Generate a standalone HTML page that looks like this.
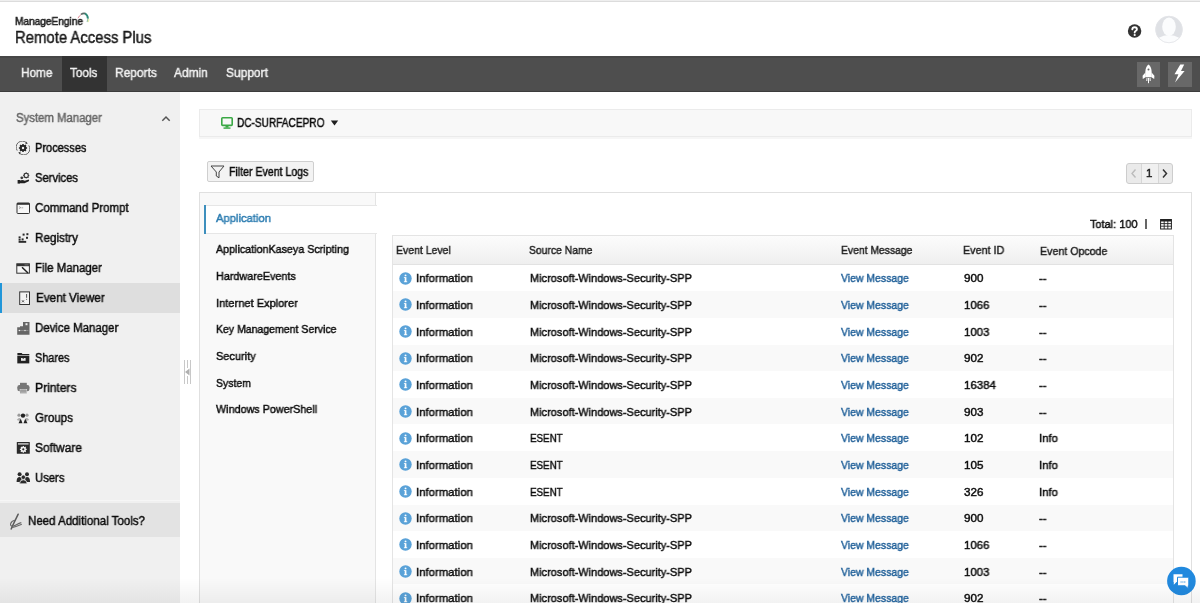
<!DOCTYPE html>
<html><head><meta charset="utf-8"><style>
html,body{margin:0;padding:0;width:1200px;height:603px;overflow:hidden;background:#fff;font-family:"Liberation Sans", sans-serif;}
.b{position:absolute;}
.t{position:absolute;white-space:nowrap;font-family:"Liberation Sans", sans-serif;transform-origin:0 0;will-change:transform;-webkit-text-stroke:0.45px currentColor;}
</style></head><body>
<div class="b" style="left:0px;top:0px;width:1200px;height:1px;background:#eeeeee"></div>
<div class="b" style="left:0px;top:1px;width:1200px;height:1px;background:#dcdcdc"></div>
<svg class="b" style="left:74px;top:10px" width="16" height="14" viewBox="0 0 16 14"><path d="M4 8.2 Q5.2 5.6 7.4 4.3" stroke="#d9707f" stroke-width="0.8" fill="none"/><path d="M7 4.4 Q9.3 2.9 11.4 3.6" stroke="#5b6b66" stroke-width="1.7" fill="none"/><path d="M11 3.5 Q13.9 5 13.9 8.8" stroke="#2f8a78" stroke-width="1.9" fill="none"/><path d="M13.9 8.5 Q13.8 10.6 13 11.8" stroke="#9cc3b0" stroke-width="1.3" fill="none"/><path d="M14.8 9 Q14.9 10.6 14.2 12" stroke="#e6ee9a" stroke-width="1.2" fill="none" opacity=".8"/></svg>
<svg class="b" style="left:1127px;top:24px" width="15" height="15" viewBox="0 0 15 15"><circle cx="7.6" cy="7" r="6.7" fill="#333"/><path d="M5.3 5.4 Q5.4 3.2 7.6 3.2 Q9.9 3.2 9.9 5.2 Q9.9 6.4 8.6 7 Q7.7 7.5 7.7 8.6" stroke="#fff" stroke-width="1.9" fill="none" stroke-linecap="round"/><circle cx="7.7" cy="11" r="1.1" fill="#fff"/></svg>
<svg class="b" style="left:1154px;top:15px" width="30" height="30" viewBox="0 0 30 30"><circle cx="15" cy="14.5" r="13.6" fill="#dfe1e5"/><ellipse cx="15" cy="11.8" rx="6.8" ry="9.2" fill="#fbfcfd"/><path d="M4.4 23 Q15 17 25.6 23 A13.6 13.6 0 0 1 4.4 23Z" fill="#fbfcfd"/><circle cx="15" cy="14.5" r="13.3" fill="none" stroke="#e3e5e8" stroke-width="0.8"/></svg>
<div class="b" style="left:0px;top:56px;width:1200px;height:36px;background:#4e4e4e"></div>
<div class="b" style="left:0px;top:56px;width:1200px;height:2px;background:#474747"></div>
<div class="b" style="left:0px;top:91px;width:1200px;height:1px;background:#3c3c3c"></div>
<div class="b" style="left:62px;top:56px;width:45px;height:36px;background:#333333"></div>
<div class="b" style="left:1137px;top:62px;width:23px;height:25px;background:#686868"></div>
<div class="b" style="left:1168px;top:62px;width:24px;height:25px;background:#686868"></div>
<svg class="b" style="left:1142px;top:64px" width="13" height="20" viewBox="0 0 13 20"><path d="M6.5 0.6 C9.8 3 10.2 8.5 9.2 13.2 L3.8 13.2 C2.8 8.5 3.2 3 6.5 0.6Z" fill="#fff"/><circle cx="6.5" cy="5.4" r="1" fill="#686868"/><path d="M3.4 8.5 L0.6 11.8 L0.8 15 L3.9 13Z M9.6 8.5 L12.4 11.8 L12.2 15 L9.1 13Z" fill="#fff"/><path d="M5 14 L4.8 17 M6.5 14 L6.5 19.2 M8 14 L8.2 17" stroke="#fff" stroke-width="1"/></svg>
<svg class="b" style="left:1174px;top:64px" width="11" height="19" viewBox="0 0 11 19"><path d="M6.3 0.5 L10.2 0.5 L7 6.9 L10.6 6.9 L1 18.6 L4.4 10.2 L0.5 10.2Z" fill="#fff"/></svg>
<div class="b" style="left:0px;top:92px;width:180px;height:511px;background:#f0f0f0"></div>
<svg class="b" style="left:161px;top:115px" width="10" height="7" viewBox="0 0 10 7"><path d="M1.3 5.8 L5 2 L8.7 5.8" stroke="#555" stroke-width="1.5" fill="none"/></svg>
<div class="b" style="left:0px;top:283px;width:180px;height:30px;background:#dedede"></div>
<div class="b" style="left:0px;top:283px;width:2px;height:30px;background:#2196d9"></div>
<div class="b" style="left:0px;top:500px;width:180px;height:1px;background:#f6f6f6"></div>
<div class="b" style="left:0px;top:503px;width:180px;height:34px;background:#e3e3e3"></div>
<svg class="b" style="left:183px;top:359px" width="9" height="26" viewBox="0 0 9 26"><path d="M1.5 1 V25 M4.5 1 V9 M4.5 17 V25 M7.5 1 V25" stroke="#c8c8c8" stroke-width="1"/><path d="M2 13 L6.5 9.5 L6.5 16.5Z" fill="#b0b0b0"/></svg>
<svg class="b" style="left:16px;top:141px" width="14" height="14" viewBox="0 0 14 14"><path d="M10.6 1.9 A6.1 6.1 0 0 0 1.2 9.6" stroke="#555" stroke-width="0.9" fill="none"/><path d="M3.4 12.1 A6.1 6.1 0 0 0 12.8 4.4" stroke="#555" stroke-width="0.9" fill="none"/><path d="M10 0.6 L11.8 2.4 L9.4 3.2Z M4 13.4 L2.2 11.6 L4.6 10.8Z" fill="#444"/><g transform="translate(7,7)"><circle r="3.3" fill="#262626"/><g stroke="#262626" stroke-width="1.5" stroke-linecap="butt"><path d="M0 -4.1 V4.1 M-4.1 0 H4.1 M-2.9 -2.9 L2.9 2.9 M-2.9 2.9 L2.9 -2.9"/></g><circle r="1.2" fill="#f0f0f0"/></g></svg>
<svg class="b" style="left:17px;top:172px" width="13" height="12" viewBox="0 0 13 12"><g transform="translate(9.2,3.4)"><circle r="2.1" fill="none" stroke="#333" stroke-width="1.1"/><path d="M0 -3.1 V-2 M0 2 V3.1 M-3.1 0 H-2 M2 0 H3.1 M-2.2 -2.2 L-1.5 -1.5 M1.5 1.5 L2.2 2.2 M-2.2 2.2 L-1.5 1.5 M1.5 -1.5 L2.2 -2.2" stroke="#333" stroke-width="1"/></g><circle cx="4.8" cy="5.8" r="1.4" fill="#3a3a3a"/><path d="M0.6 8 H3 V11.6 H0.6Z" fill="#222"/><path d="M3 8.4 Q5.8 7.5 7.8 8.8 L11.6 7.6 Q12.6 8.2 11.8 9.2 L7.5 11.2 L3 11.2Z" fill="#222"/></svg>
<svg class="b" style="left:16px;top:202px" width="14" height="12" viewBox="0 0 14 12"><rect x="1" y="1" width="12.5" height="10.5" rx="0.8" fill="#f7f7f7" stroke="#333" stroke-width="1"/><rect x="1" y="1" width="12.5" height="1.8" fill="#333"/><path d="M3 4.6 L4.8 5.6 L3 6.6" stroke="#777" stroke-width="0.6" fill="none"/><path d="M5.5 5.8 H7.2" stroke="#777" stroke-width="0.6"/></svg>
<svg class="b" style="left:18px;top:233px" width="11" height="10" viewBox="0 0 11 10"><g fill="#2a2a2a"><rect x="4.6" y="0.6" width="2" height="2"/><rect x="8.4" y="0.2" width="2" height="2"/><rect x="0.6" y="3.4" width="2" height="2"/><rect x="8" y="3.8" width="2" height="2"/><rect x="0.6" y="5.8" width="2" height="1.8"/><rect x="3.6" y="5.4" width="2" height="2"/><rect x="0.6" y="7.9" width="7.6" height="1.9"/></g></svg>
<svg class="b" style="left:16px;top:263px" width="14" height="11" viewBox="0 0 14 11"><rect x="0.8" y="0.8" width="12.6" height="9.4" fill="#f7f7f7" stroke="#333" stroke-width="1"/><rect x="0.8" y="0.8" width="12.6" height="2.4" fill="#333"/><rect x="8.5" y="1.5" width="4" height="0.8" fill="#888"/><path d="M6 4.2 L12 10" stroke="#222" stroke-width="1.5"/></svg>
<svg class="b" style="left:19px;top:291px" width="11" height="14" viewBox="0 0 11 14"><rect x="0.7" y="0.9" width="9.8" height="12.6" fill="#f3f3f3" stroke="#333" stroke-width="1"/><path d="M3 9.3 L5 11.3 M5 9.3 L3 11.3" stroke="#333" stroke-width="0.8"/><path d="M7.6 3 V6.8" stroke="#444" stroke-width="0.9"/><circle cx="7.6" cy="8.3" r="0.5" fill="#444"/></svg>
<svg class="b" style="left:17px;top:321px" width="13" height="14" viewBox="0 0 13 14"><path d="M6 1 H12.5 V13.8 H0.2 V6.3 H3 V5.2 H6Z" fill="#666"/><rect x="8.5" y="2.2" width="2" height="2" fill="#eee"/><path d="M1 9.5 H11.5" stroke="#aaa" stroke-width="0.5"/><circle cx="2.5" cy="9.5" r="0.7" fill="#eee"/><circle cx="8" cy="9.5" r="0.7" fill="#eee"/></svg>
<svg class="b" style="left:17px;top:352px" width="13" height="12" viewBox="0 0 13 12"><path d="M0.4 1 H4.6 L5.5 2 H12.3 V3 H0.4Z" fill="#222"/><rect x="0.3" y="3.6" width="12" height="7.8" fill="#222"/><rect x="4" y="6" width="4.6" height="2.8" fill="#e6e6e6"/><rect x="5.6" y="6.4" width="1.4" height="0.6" fill="#222"/></svg>
<svg class="b" style="left:17px;top:382px" width="13" height="12" viewBox="0 0 13 12"><rect x="3" y="0.8" width="6.8" height="2.5" fill="#777"/><rect x="0.3" y="3" width="12.2" height="6.2" rx="2.2" fill="#777"/><rect x="3" y="7.4" width="6.8" height="4.2" fill="#888" stroke="#f0f0f0" stroke-width="0.5"/><path d="M3.8 9 H9 M3.8 10.4 H9" stroke="#ddd" stroke-width="0.5"/></svg>
<svg class="b" style="left:16px;top:412px" width="14" height="12" viewBox="0 0 14 12"><circle cx="3" cy="3.2" r="1.6" fill="#999"/><circle cx="11" cy="3.2" r="1.6" fill="#999"/><path d="M0.8 8 Q3 4.8 5 7 L4 9Z M13.2 8 Q11 4.8 9 7 L10 9Z" fill="#aaa"/><circle cx="7" cy="3.6" r="2.2" fill="#222"/><path d="M2.5 11.2 L4.8 6.8 L6.5 11.2Z M7.5 11.2 L9.2 6.8 L11.5 11.2Z" fill="#222"/></svg>
<svg class="b" style="left:16px;top:441px" width="14" height="13" viewBox="0 0 14 13"><rect x="0.8" y="1" width="13" height="11.8" rx="0.5" fill="#2a2a2a"/><rect x="2" y="2.2" width="10.6" height="1.4" fill="#cfcfcf"/><g transform="translate(7.3,8.3)"><circle r="2.6" fill="#f0f0f0"/><path d="M0 -3.4 V3.4 M-3.4 0 H3.4 M-2.4 -2.4 L2.4 2.4 M-2.4 2.4 L2.4 -2.4" stroke="#f0f0f0" stroke-width="1.3"/><circle r="1.1" fill="#2a2a2a"/></g></svg>
<svg class="b" style="left:16px;top:471px" width="15" height="13" viewBox="0 0 15 13"><g fill="#2a2a2a"><circle cx="3.6" cy="3.3" r="2"/><circle cx="11" cy="3.3" r="2"/><path d="M0.6 10 Q0.8 6 3.6 6 Q5.5 6 6 7.5 L4 11 L0.6 11Z"/><path d="M14 10 Q13.8 6 11 6 Q9.2 6 8.7 7.5 L10.6 11 L14 11Z"/><circle cx="7.3" cy="6.2" r="2.2" fill="#2a2a2a" stroke="#f0f0f0" stroke-width="0.7"/><path d="M3.5 12.8 Q3.6 8.8 7.3 8.8 Q11 8.8 11.1 12.8Z" stroke="#f0f0f0" stroke-width="0.7"/></g></svg>
<svg class="b" style="left:8px;top:512px" width="15" height="18" viewBox="0 0 15 18"><path d="M10.2 2.2 L4.2 14.5 L3.2 17" stroke="#5a5a5a" stroke-width="1.5" fill="none" stroke-linecap="round"/><path d="M7 8.2 C2.2 9 1.2 14.2 4.4 14.2 C7 14.2 9.5 11.2 13.3 10.6" stroke="#666" stroke-width="1.1" fill="none"/><path d="M3.8 15.6 C7.5 14.8 10.5 13.6 13.8 12.2" stroke="#6a6a6a" stroke-width="1.1" fill="none"/></svg>
<div class="b" style="left:199px;top:109px;width:993px;height:28px;background:#f8f8f8;border:1px solid #ebebeb;box-sizing:border-box;box-shadow:0 2px 0 #f6f6f6"></div>
<svg class="b" style="left:221px;top:117px" width="12" height="12" viewBox="0 0 12 12"><rect x="0.8" y="0.8" width="10.4" height="7.6" rx="0.8" stroke="#3aa845" stroke-width="1.6" fill="none"/><rect x="4.5" y="8.8" width="3" height="1.8" fill="#3aa845"/><rect x="2.5" y="10.4" width="7" height="1.4" fill="#3aa845"/></svg>
<svg class="b" style="left:330px;top:120px" width="9" height="6" viewBox="0 0 9 6"><path d="M0.8 0.5 L8.2 0.5 L4.5 5.5Z" fill="#1f1f1f"/></svg>
<div class="b" style="left:207px;top:161px;width:107px;height:21px;background:#f3f3f3;border:1px solid #cfcfcf;border-radius:2px;box-sizing:border-box"></div>
<svg class="b" style="left:210px;top:165px" width="15" height="14" viewBox="0 0 15 14"><path d="M1 1 L14 1 L9 7 L9 12.8 L6.3 11 L6.3 7Z" stroke="#444" stroke-width="1" fill="none" stroke-linejoin="round"/></svg>
<div class="b" style="left:1126px;top:163px;width:47px;height:21px;border:1px solid #cdcdcd;border-radius:3px;box-sizing:border-box;background:#eaeaea;overflow:hidden"><div style="position:absolute;left:14px;top:0;width:16px;height:19px;background:#f0f0f0;border-left:1px solid #d6d6d6;border-right:1px solid #d6d6d6"></div></div>
<svg class="b" style="left:1130px;top:168px" width="8" height="11" viewBox="0 0 8 11"><path d="M5.5 1.5 L2 5.5 L5.5 9.5" stroke="#bbb" stroke-width="1.4" fill="none"/></svg>
<svg class="b" style="left:1161px;top:168px" width="8" height="11" viewBox="0 0 8 11"><path d="M2 1.5 L5.5 5.5 L2 9.5" stroke="#333" stroke-width="1.5" fill="none"/></svg>
<div class="b" style="left:199px;top:192px;width:993px;height:420px;border:1px solid #e0e0e0;box-sizing:border-box;background:#fff"></div>
<div class="b" style="left:200px;top:193px;width:175px;height:420px;background:#f9f9f9;border-right:1px solid #e4e4e4"></div>
<div class="b" style="left:204px;top:205px;width:173px;height:29px;background:#fff;border-top:1px solid #e6e6e6;border-bottom:1px solid #e6e6e6;box-sizing:border-box"></div>
<div class="b" style="left:204px;top:205px;width:2px;height:29px;background:#3d8fbd"></div>
<div class="b" style="left:1145.4px;top:219px;width:1.5px;height:10px;background:#666"></div>
<svg class="b" style="left:1160px;top:219px" width="12" height="11" viewBox="0 0 12 11"><rect x="0.6" y="0.5" width="10.8" height="9.5" fill="none" stroke="#222" stroke-width="1"/><rect x="0.6" y="0.5" width="10.8" height="2" fill="#222"/><path d="M0.6 4.6 H11.4 M0.6 7.2 H11.4 M4.2 0.5 V10 M7.8 0.5 V10" stroke="#222" stroke-width="0.9"/></svg>
<div class="b" style="left:392px;top:235px;width:782px;height:400px;border:1px solid #e4e4e4;border-bottom:none;box-sizing:border-box;background:#fff"></div>
<div class="b" style="left:393px;top:236px;width:780px;height:29px;background:linear-gradient(#fcfcfc,#efefef);border-bottom:1px solid #e2e2e2;box-sizing:border-box"></div>
<svg class="b" style="left:399px;top:271.50px" width="13" height="13" viewBox="0 0 13 13"><circle cx="6.5" cy="6.5" r="6.2" fill="#5aa2d8"/><rect x="5.7" y="5.2" width="1.7" height="4.8" fill="#fff"/><circle cx="6.55" cy="3.4" r="0.95" fill="#fff"/><rect x="4.9" y="9.3" width="3.3" height="0.9" fill="#fff"/><rect x="4.9" y="5.2" width="1.6" height="0.8" fill="#fff"/></svg>
<div class="b" style="left:393px;top:291.17px;width:780px;height:26.667px;background:#f9f9f9"></div>
<svg class="b" style="left:399px;top:298.17px" width="13" height="13" viewBox="0 0 13 13"><circle cx="6.5" cy="6.5" r="6.2" fill="#5aa2d8"/><rect x="5.7" y="5.2" width="1.7" height="4.8" fill="#fff"/><circle cx="6.55" cy="3.4" r="0.95" fill="#fff"/><rect x="4.9" y="9.3" width="3.3" height="0.9" fill="#fff"/><rect x="4.9" y="5.2" width="1.6" height="0.8" fill="#fff"/></svg>
<svg class="b" style="left:399px;top:324.83px" width="13" height="13" viewBox="0 0 13 13"><circle cx="6.5" cy="6.5" r="6.2" fill="#5aa2d8"/><rect x="5.7" y="5.2" width="1.7" height="4.8" fill="#fff"/><circle cx="6.55" cy="3.4" r="0.95" fill="#fff"/><rect x="4.9" y="9.3" width="3.3" height="0.9" fill="#fff"/><rect x="4.9" y="5.2" width="1.6" height="0.8" fill="#fff"/></svg>
<div class="b" style="left:393px;top:344.5px;width:780px;height:26.667px;background:#f9f9f9"></div>
<svg class="b" style="left:399px;top:351.50px" width="13" height="13" viewBox="0 0 13 13"><circle cx="6.5" cy="6.5" r="6.2" fill="#5aa2d8"/><rect x="5.7" y="5.2" width="1.7" height="4.8" fill="#fff"/><circle cx="6.55" cy="3.4" r="0.95" fill="#fff"/><rect x="4.9" y="9.3" width="3.3" height="0.9" fill="#fff"/><rect x="4.9" y="5.2" width="1.6" height="0.8" fill="#fff"/></svg>
<svg class="b" style="left:399px;top:378.17px" width="13" height="13" viewBox="0 0 13 13"><circle cx="6.5" cy="6.5" r="6.2" fill="#5aa2d8"/><rect x="5.7" y="5.2" width="1.7" height="4.8" fill="#fff"/><circle cx="6.55" cy="3.4" r="0.95" fill="#fff"/><rect x="4.9" y="9.3" width="3.3" height="0.9" fill="#fff"/><rect x="4.9" y="5.2" width="1.6" height="0.8" fill="#fff"/></svg>
<div class="b" style="left:393px;top:397.84px;width:780px;height:26.667px;background:#f9f9f9"></div>
<svg class="b" style="left:399px;top:404.84px" width="13" height="13" viewBox="0 0 13 13"><circle cx="6.5" cy="6.5" r="6.2" fill="#5aa2d8"/><rect x="5.7" y="5.2" width="1.7" height="4.8" fill="#fff"/><circle cx="6.55" cy="3.4" r="0.95" fill="#fff"/><rect x="4.9" y="9.3" width="3.3" height="0.9" fill="#fff"/><rect x="4.9" y="5.2" width="1.6" height="0.8" fill="#fff"/></svg>
<svg class="b" style="left:399px;top:431.50px" width="13" height="13" viewBox="0 0 13 13"><circle cx="6.5" cy="6.5" r="6.2" fill="#5aa2d8"/><rect x="5.7" y="5.2" width="1.7" height="4.8" fill="#fff"/><circle cx="6.55" cy="3.4" r="0.95" fill="#fff"/><rect x="4.9" y="9.3" width="3.3" height="0.9" fill="#fff"/><rect x="4.9" y="5.2" width="1.6" height="0.8" fill="#fff"/></svg>
<div class="b" style="left:393px;top:451.17px;width:780px;height:26.667px;background:#f9f9f9"></div>
<svg class="b" style="left:399px;top:458.17px" width="13" height="13" viewBox="0 0 13 13"><circle cx="6.5" cy="6.5" r="6.2" fill="#5aa2d8"/><rect x="5.7" y="5.2" width="1.7" height="4.8" fill="#fff"/><circle cx="6.55" cy="3.4" r="0.95" fill="#fff"/><rect x="4.9" y="9.3" width="3.3" height="0.9" fill="#fff"/><rect x="4.9" y="5.2" width="1.6" height="0.8" fill="#fff"/></svg>
<svg class="b" style="left:399px;top:484.84px" width="13" height="13" viewBox="0 0 13 13"><circle cx="6.5" cy="6.5" r="6.2" fill="#5aa2d8"/><rect x="5.7" y="5.2" width="1.7" height="4.8" fill="#fff"/><circle cx="6.55" cy="3.4" r="0.95" fill="#fff"/><rect x="4.9" y="9.3" width="3.3" height="0.9" fill="#fff"/><rect x="4.9" y="5.2" width="1.6" height="0.8" fill="#fff"/></svg>
<div class="b" style="left:393px;top:504.5px;width:780px;height:26.667px;background:#f9f9f9"></div>
<svg class="b" style="left:399px;top:511.50px" width="13" height="13" viewBox="0 0 13 13"><circle cx="6.5" cy="6.5" r="6.2" fill="#5aa2d8"/><rect x="5.7" y="5.2" width="1.7" height="4.8" fill="#fff"/><circle cx="6.55" cy="3.4" r="0.95" fill="#fff"/><rect x="4.9" y="9.3" width="3.3" height="0.9" fill="#fff"/><rect x="4.9" y="5.2" width="1.6" height="0.8" fill="#fff"/></svg>
<svg class="b" style="left:399px;top:538.17px" width="13" height="13" viewBox="0 0 13 13"><circle cx="6.5" cy="6.5" r="6.2" fill="#5aa2d8"/><rect x="5.7" y="5.2" width="1.7" height="4.8" fill="#fff"/><circle cx="6.55" cy="3.4" r="0.95" fill="#fff"/><rect x="4.9" y="9.3" width="3.3" height="0.9" fill="#fff"/><rect x="4.9" y="5.2" width="1.6" height="0.8" fill="#fff"/></svg>
<div class="b" style="left:393px;top:557.84px;width:780px;height:26.667px;background:#f9f9f9"></div>
<svg class="b" style="left:399px;top:564.84px" width="13" height="13" viewBox="0 0 13 13"><circle cx="6.5" cy="6.5" r="6.2" fill="#5aa2d8"/><rect x="5.7" y="5.2" width="1.7" height="4.8" fill="#fff"/><circle cx="6.55" cy="3.4" r="0.95" fill="#fff"/><rect x="4.9" y="9.3" width="3.3" height="0.9" fill="#fff"/><rect x="4.9" y="5.2" width="1.6" height="0.8" fill="#fff"/></svg>
<svg class="b" style="left:399px;top:591.50px" width="13" height="13" viewBox="0 0 13 13"><circle cx="6.5" cy="6.5" r="6.2" fill="#5aa2d8"/><rect x="5.7" y="5.2" width="1.7" height="4.8" fill="#fff"/><circle cx="6.55" cy="3.4" r="0.95" fill="#fff"/><rect x="4.9" y="9.3" width="3.3" height="0.9" fill="#fff"/><rect x="4.9" y="5.2" width="1.6" height="0.8" fill="#fff"/></svg>
<svg class="b" style="left:1166px;top:566px" width="31" height="31" viewBox="0 0 31 31"><circle cx="15.4" cy="15" r="14.3" fill="#2189de"/><path d="M7.5 8.2 H16.5 V16 H10.5 L7.8 18.8 V16 H7.5Z" fill="#fff"/><path d="M11.5 11.2 H22.8 V19.8 H22.2 V22.6 L19 19.8 H11.5Z" fill="#fff" stroke="#2189de" stroke-width="1"/><path d="M14.5 16 H20" stroke="#2189de" stroke-width="0.9" stroke-dasharray="1.2 0.6"/></svg>
<div class="b" style="left:0;top:578px;width:1200px;height:25px;background:linear-gradient(rgba(0,0,0,0),rgba(0,0,0,0.05));pointer-events:none"></div>
<div class="t" style="left:15.00px;top:15.76px;font-size:10.8px;line-height:10.8px;color:#222;font-weight:400;transform:scaleX(0.9347);-webkit-text-stroke:0.55px #222;">ManageEngine</div>
<div class="t" style="left:14.90px;top:29.76px;font-size:16px;line-height:16px;color:#1a1a1a;font-weight:400;transform:scaleX(0.9296);">Remote Access Plus</div>
<div class="t" style="left:21.40px;top:66.00px;font-size:13px;line-height:13px;color:#f2f2f2;font-weight:400;transform:scaleX(0.9052);">Home</div>
<div class="t" style="left:70.40px;top:66.00px;font-size:13px;line-height:13px;color:#f2f2f2;font-weight:400;transform:scaleX(0.9025);">Tools</div>
<div class="t" style="left:115.40px;top:66.00px;font-size:13px;line-height:13px;color:#f2f2f2;font-weight:400;transform:scaleX(0.9202);">Reports</div>
<div class="t" style="left:174.40px;top:66.00px;font-size:13px;line-height:13px;color:#f2f2f2;font-weight:400;transform:scaleX(0.9197);">Admin</div>
<div class="t" style="left:226.40px;top:66.00px;font-size:13px;line-height:13px;color:#f2f2f2;font-weight:400;transform:scaleX(0.9199);">Support</div>
<div class="t" style="left:16.20px;top:112.34px;font-size:12px;line-height:12px;color:#666;font-weight:400;transform:scaleX(0.9470);">System Manager</div>
<div class="t" style="left:34.80px;top:141.99px;font-size:12.3px;line-height:12.3px;color:#0c0c0c;font-weight:400;transform:scaleX(0.8951);">Processes</div>
<div class="t" style="left:34.80px;top:171.99px;font-size:12.3px;line-height:12.3px;color:#0c0c0c;font-weight:400;transform:scaleX(0.9097);">Services</div>
<div class="t" style="left:34.80px;top:201.99px;font-size:12.3px;line-height:12.3px;color:#0c0c0c;font-weight:400;transform:scaleX(0.9391);">Command Prompt</div>
<div class="t" style="left:34.80px;top:231.99px;font-size:12.3px;line-height:12.3px;color:#0c0c0c;font-weight:400;transform:scaleX(0.9510);">Registry</div>
<div class="t" style="left:34.80px;top:261.99px;font-size:12.3px;line-height:12.3px;color:#0c0c0c;font-weight:400;transform:scaleX(0.9322);">File Manager</div>
<div class="t" style="left:36.40px;top:291.99px;font-size:12.3px;line-height:12.3px;color:#0c0c0c;font-weight:400;transform:scaleX(0.9497);">Event Viewer</div>
<div class="t" style="left:34.80px;top:321.99px;font-size:12.3px;line-height:12.3px;color:#0c0c0c;font-weight:400;transform:scaleX(0.9302);">Device Manager</div>
<div class="t" style="left:34.80px;top:351.99px;font-size:12.3px;line-height:12.3px;color:#0c0c0c;font-weight:400;transform:scaleX(0.8853);">Shares</div>
<div class="t" style="left:34.80px;top:381.99px;font-size:12.3px;line-height:12.3px;color:#0c0c0c;font-weight:400;transform:scaleX(0.9817);">Printers</div>
<div class="t" style="left:34.80px;top:411.99px;font-size:12.3px;line-height:12.3px;color:#0c0c0c;font-weight:400;transform:scaleX(0.9398);">Groups</div>
<div class="t" style="left:34.80px;top:441.99px;font-size:12.3px;line-height:12.3px;color:#0c0c0c;font-weight:400;transform:scaleX(0.9664);">Software</div>
<div class="t" style="left:34.80px;top:471.99px;font-size:12.3px;line-height:12.3px;color:#0c0c0c;font-weight:400;transform:scaleX(0.9183);">Users</div>
<div class="t" style="left:27.70px;top:513.70px;font-size:13px;line-height:13px;color:#0c0c0c;font-weight:400;transform:scaleX(0.8854);">Need Additional Tools?</div>
<div class="t" style="left:237.20px;top:117.24px;font-size:12px;line-height:12px;color:#0c0c0c;font-weight:400;transform:scaleX(0.8403);">DC-SURFACEPRO</div>
<div class="t" style="left:228.90px;top:165.84px;font-size:12px;line-height:12px;color:#0c0c0c;font-weight:400;transform:scaleX(0.8818);">Filter Event Logs</div>
<div class="t" style="left:1145.90px;top:167.77px;font-size:11.5px;line-height:11.5px;color:#222;font-weight:400;transform:scaleX(1.0000);">1</div>
<div class="t" style="left:216.10px;top:212.10px;font-size:11.7px;line-height:11.7px;color:#2a7bb0;font-weight:400;transform:scaleX(0.9600);">Application</div>
<div class="t" style="left:216.30px;top:243.40px;font-size:11.7px;line-height:11.7px;color:#0c0c0c;font-weight:400;transform:scaleX(0.9172);">ApplicationKaseya Scripting</div>
<div class="t" style="left:216.30px;top:270.06px;font-size:11.7px;line-height:11.7px;color:#0c0c0c;font-weight:400;transform:scaleX(0.9247);">HardwareEvents</div>
<div class="t" style="left:216.30px;top:296.73px;font-size:11.7px;line-height:11.7px;color:#0c0c0c;font-weight:400;transform:scaleX(0.9478);">Internet Explorer</div>
<div class="t" style="left:216.30px;top:323.40px;font-size:11.7px;line-height:11.7px;color:#0c0c0c;font-weight:400;transform:scaleX(0.9004);">Key Management Service</div>
<div class="t" style="left:216.30px;top:350.06px;font-size:11.7px;line-height:11.7px;color:#0c0c0c;font-weight:400;transform:scaleX(0.9376);">Security</div>
<div class="t" style="left:216.30px;top:376.73px;font-size:11.7px;line-height:11.7px;color:#0c0c0c;font-weight:400;transform:scaleX(0.8956);">System</div>
<div class="t" style="left:216.30px;top:403.40px;font-size:11.7px;line-height:11.7px;color:#0c0c0c;font-weight:400;transform:scaleX(0.9209);">Windows PowerShell</div>
<div class="t" style="left:1090.40px;top:217.70px;font-size:11.7px;line-height:11.7px;color:#0c0c0c;font-weight:400;transform:scaleX(0.9371);">Total: 100</div>
<div class="t" style="left:395.70px;top:244.20px;font-size:11.7px;line-height:11.7px;color:#222;font-weight:400;transform:scaleX(0.8948);">Event Level</div>
<div class="t" style="left:528.90px;top:244.20px;font-size:11.7px;line-height:11.7px;color:#222;font-weight:400;transform:scaleX(0.8871);">Source Name</div>
<div class="t" style="left:840.70px;top:244.20px;font-size:11.7px;line-height:11.7px;color:#222;font-weight:400;transform:scaleX(0.8863);">Event Message</div>
<div class="t" style="left:963.20px;top:244.20px;font-size:11.7px;line-height:11.7px;color:#222;font-weight:400;transform:scaleX(0.9180);">Event ID</div>
<div class="t" style="left:1040.40px;top:245.20px;font-size:11.7px;line-height:11.7px;color:#222;font-weight:400;transform:scaleX(0.9099);">Event Opcode</div>
<div class="t" style="left:416.10px;top:272.40px;font-size:11.7px;line-height:11.7px;color:#0c0c0c;font-weight:400;transform:scaleX(0.9732);">Information</div>
<div class="t" style="left:530.10px;top:272.40px;font-size:11.7px;line-height:11.7px;color:#0c0c0c;font-weight:400;transform:scaleX(0.9407);">Microsoft-Windows-Security-SPP</div>
<div class="t" style="left:841.40px;top:272.40px;font-size:11.7px;line-height:11.7px;color:#1f5f98;font-weight:400;transform:scaleX(0.8958);">View Message</div>
<div class="t" style="left:963.90px;top:272.40px;font-size:11.7px;line-height:11.7px;color:#0c0c0c;font-weight:400;transform:scaleX(0.9941);">900</div>
<div class="t" style="left:1039.20px;top:272.40px;font-size:11.7px;line-height:11.7px;color:#0c0c0c;font-weight:400;transform:scaleX(0.9491);">--</div>
<div class="t" style="left:416.10px;top:299.06px;font-size:11.7px;line-height:11.7px;color:#0c0c0c;font-weight:400;transform:scaleX(0.9732);">Information</div>
<div class="t" style="left:530.10px;top:299.06px;font-size:11.7px;line-height:11.7px;color:#0c0c0c;font-weight:400;transform:scaleX(0.9407);">Microsoft-Windows-Security-SPP</div>
<div class="t" style="left:841.40px;top:299.06px;font-size:11.7px;line-height:11.7px;color:#1f5f98;font-weight:400;transform:scaleX(0.8958);">View Message</div>
<div class="t" style="left:963.90px;top:299.06px;font-size:11.7px;line-height:11.7px;color:#0c0c0c;font-weight:400;transform:scaleX(0.9763);">1066</div>
<div class="t" style="left:1039.20px;top:299.06px;font-size:11.7px;line-height:11.7px;color:#0c0c0c;font-weight:400;transform:scaleX(0.9491);">--</div>
<div class="t" style="left:416.10px;top:325.73px;font-size:11.7px;line-height:11.7px;color:#0c0c0c;font-weight:400;transform:scaleX(0.9732);">Information</div>
<div class="t" style="left:530.10px;top:325.73px;font-size:11.7px;line-height:11.7px;color:#0c0c0c;font-weight:400;transform:scaleX(0.9407);">Microsoft-Windows-Security-SPP</div>
<div class="t" style="left:841.40px;top:325.73px;font-size:11.7px;line-height:11.7px;color:#1f5f98;font-weight:400;transform:scaleX(0.8958);">View Message</div>
<div class="t" style="left:963.90px;top:325.73px;font-size:11.7px;line-height:11.7px;color:#0c0c0c;font-weight:400;transform:scaleX(0.9763);">1003</div>
<div class="t" style="left:1039.20px;top:325.73px;font-size:11.7px;line-height:11.7px;color:#0c0c0c;font-weight:400;transform:scaleX(0.9491);">--</div>
<div class="t" style="left:416.10px;top:352.40px;font-size:11.7px;line-height:11.7px;color:#0c0c0c;font-weight:400;transform:scaleX(0.9732);">Information</div>
<div class="t" style="left:530.10px;top:352.40px;font-size:11.7px;line-height:11.7px;color:#0c0c0c;font-weight:400;transform:scaleX(0.9407);">Microsoft-Windows-Security-SPP</div>
<div class="t" style="left:841.40px;top:352.40px;font-size:11.7px;line-height:11.7px;color:#1f5f98;font-weight:400;transform:scaleX(0.8958);">View Message</div>
<div class="t" style="left:963.90px;top:352.40px;font-size:11.7px;line-height:11.7px;color:#0c0c0c;font-weight:400;transform:scaleX(0.9941);">902</div>
<div class="t" style="left:1039.20px;top:352.40px;font-size:11.7px;line-height:11.7px;color:#0c0c0c;font-weight:400;transform:scaleX(0.9491);">--</div>
<div class="t" style="left:416.10px;top:379.06px;font-size:11.7px;line-height:11.7px;color:#0c0c0c;font-weight:400;transform:scaleX(0.9732);">Information</div>
<div class="t" style="left:530.10px;top:379.06px;font-size:11.7px;line-height:11.7px;color:#0c0c0c;font-weight:400;transform:scaleX(0.9407);">Microsoft-Windows-Security-SPP</div>
<div class="t" style="left:841.40px;top:379.06px;font-size:11.7px;line-height:11.7px;color:#1f5f98;font-weight:400;transform:scaleX(0.8958);">View Message</div>
<div class="t" style="left:963.90px;top:379.06px;font-size:11.7px;line-height:11.7px;color:#0c0c0c;font-weight:400;transform:scaleX(0.9811);">16384</div>
<div class="t" style="left:1039.20px;top:379.06px;font-size:11.7px;line-height:11.7px;color:#0c0c0c;font-weight:400;transform:scaleX(0.9491);">--</div>
<div class="t" style="left:416.10px;top:405.73px;font-size:11.7px;line-height:11.7px;color:#0c0c0c;font-weight:400;transform:scaleX(0.9732);">Information</div>
<div class="t" style="left:530.10px;top:405.73px;font-size:11.7px;line-height:11.7px;color:#0c0c0c;font-weight:400;transform:scaleX(0.9407);">Microsoft-Windows-Security-SPP</div>
<div class="t" style="left:841.40px;top:405.73px;font-size:11.7px;line-height:11.7px;color:#1f5f98;font-weight:400;transform:scaleX(0.8958);">View Message</div>
<div class="t" style="left:963.90px;top:405.73px;font-size:11.7px;line-height:11.7px;color:#0c0c0c;font-weight:400;transform:scaleX(0.9941);">903</div>
<div class="t" style="left:1039.20px;top:405.73px;font-size:11.7px;line-height:11.7px;color:#0c0c0c;font-weight:400;transform:scaleX(0.9491);">--</div>
<div class="t" style="left:416.10px;top:432.40px;font-size:11.7px;line-height:11.7px;color:#0c0c0c;font-weight:400;transform:scaleX(0.9732);">Information</div>
<div class="t" style="left:530.10px;top:432.40px;font-size:11.7px;line-height:11.7px;color:#0c0c0c;font-weight:400;transform:scaleX(0.8391);">ESENT</div>
<div class="t" style="left:841.40px;top:432.40px;font-size:11.7px;line-height:11.7px;color:#1f5f98;font-weight:400;transform:scaleX(0.8958);">View Message</div>
<div class="t" style="left:963.90px;top:432.40px;font-size:11.7px;line-height:11.7px;color:#0c0c0c;font-weight:400;transform:scaleX(0.9941);">102</div>
<div class="t" style="left:1039.40px;top:432.40px;font-size:11.7px;line-height:11.7px;color:#0c0c0c;font-weight:400;transform:scaleX(0.9692);">Info</div>
<div class="t" style="left:416.10px;top:459.06px;font-size:11.7px;line-height:11.7px;color:#0c0c0c;font-weight:400;transform:scaleX(0.9732);">Information</div>
<div class="t" style="left:530.10px;top:459.06px;font-size:11.7px;line-height:11.7px;color:#0c0c0c;font-weight:400;transform:scaleX(0.8391);">ESENT</div>
<div class="t" style="left:841.40px;top:459.06px;font-size:11.7px;line-height:11.7px;color:#1f5f98;font-weight:400;transform:scaleX(0.8958);">View Message</div>
<div class="t" style="left:963.90px;top:459.06px;font-size:11.7px;line-height:11.7px;color:#0c0c0c;font-weight:400;transform:scaleX(0.9941);">105</div>
<div class="t" style="left:1039.40px;top:459.06px;font-size:11.7px;line-height:11.7px;color:#0c0c0c;font-weight:400;transform:scaleX(0.9692);">Info</div>
<div class="t" style="left:416.10px;top:485.73px;font-size:11.7px;line-height:11.7px;color:#0c0c0c;font-weight:400;transform:scaleX(0.9732);">Information</div>
<div class="t" style="left:530.10px;top:485.73px;font-size:11.7px;line-height:11.7px;color:#0c0c0c;font-weight:400;transform:scaleX(0.8391);">ESENT</div>
<div class="t" style="left:841.40px;top:485.73px;font-size:11.7px;line-height:11.7px;color:#1f5f98;font-weight:400;transform:scaleX(0.8958);">View Message</div>
<div class="t" style="left:963.90px;top:485.73px;font-size:11.7px;line-height:11.7px;color:#0c0c0c;font-weight:400;transform:scaleX(0.9941);">326</div>
<div class="t" style="left:1039.40px;top:485.73px;font-size:11.7px;line-height:11.7px;color:#0c0c0c;font-weight:400;transform:scaleX(0.9692);">Info</div>
<div class="t" style="left:416.10px;top:512.40px;font-size:11.7px;line-height:11.7px;color:#0c0c0c;font-weight:400;transform:scaleX(0.9732);">Information</div>
<div class="t" style="left:530.10px;top:512.40px;font-size:11.7px;line-height:11.7px;color:#0c0c0c;font-weight:400;transform:scaleX(0.9407);">Microsoft-Windows-Security-SPP</div>
<div class="t" style="left:841.40px;top:512.40px;font-size:11.7px;line-height:11.7px;color:#1f5f98;font-weight:400;transform:scaleX(0.8958);">View Message</div>
<div class="t" style="left:963.90px;top:512.40px;font-size:11.7px;line-height:11.7px;color:#0c0c0c;font-weight:400;transform:scaleX(0.9941);">900</div>
<div class="t" style="left:1039.20px;top:512.40px;font-size:11.7px;line-height:11.7px;color:#0c0c0c;font-weight:400;transform:scaleX(0.9491);">--</div>
<div class="t" style="left:416.10px;top:539.07px;font-size:11.7px;line-height:11.7px;color:#0c0c0c;font-weight:400;transform:scaleX(0.9732);">Information</div>
<div class="t" style="left:530.10px;top:539.07px;font-size:11.7px;line-height:11.7px;color:#0c0c0c;font-weight:400;transform:scaleX(0.9407);">Microsoft-Windows-Security-SPP</div>
<div class="t" style="left:841.40px;top:539.07px;font-size:11.7px;line-height:11.7px;color:#1f5f98;font-weight:400;transform:scaleX(0.8958);">View Message</div>
<div class="t" style="left:963.90px;top:539.07px;font-size:11.7px;line-height:11.7px;color:#0c0c0c;font-weight:400;transform:scaleX(0.9763);">1066</div>
<div class="t" style="left:1039.20px;top:539.07px;font-size:11.7px;line-height:11.7px;color:#0c0c0c;font-weight:400;transform:scaleX(0.9491);">--</div>
<div class="t" style="left:416.10px;top:565.73px;font-size:11.7px;line-height:11.7px;color:#0c0c0c;font-weight:400;transform:scaleX(0.9732);">Information</div>
<div class="t" style="left:530.10px;top:565.73px;font-size:11.7px;line-height:11.7px;color:#0c0c0c;font-weight:400;transform:scaleX(0.9407);">Microsoft-Windows-Security-SPP</div>
<div class="t" style="left:841.40px;top:565.73px;font-size:11.7px;line-height:11.7px;color:#1f5f98;font-weight:400;transform:scaleX(0.8958);">View Message</div>
<div class="t" style="left:963.90px;top:565.73px;font-size:11.7px;line-height:11.7px;color:#0c0c0c;font-weight:400;transform:scaleX(0.9763);">1003</div>
<div class="t" style="left:1039.20px;top:565.73px;font-size:11.7px;line-height:11.7px;color:#0c0c0c;font-weight:400;transform:scaleX(0.9491);">--</div>
<div class="t" style="left:416.10px;top:592.40px;font-size:11.7px;line-height:11.7px;color:#0c0c0c;font-weight:400;transform:scaleX(0.9732);">Information</div>
<div class="t" style="left:530.10px;top:592.40px;font-size:11.7px;line-height:11.7px;color:#0c0c0c;font-weight:400;transform:scaleX(0.9407);">Microsoft-Windows-Security-SPP</div>
<div class="t" style="left:841.40px;top:592.40px;font-size:11.7px;line-height:11.7px;color:#1f5f98;font-weight:400;transform:scaleX(0.8958);">View Message</div>
<div class="t" style="left:963.90px;top:592.40px;font-size:11.7px;line-height:11.7px;color:#0c0c0c;font-weight:400;transform:scaleX(0.9941);">902</div>
<div class="t" style="left:1039.20px;top:592.40px;font-size:11.7px;line-height:11.7px;color:#0c0c0c;font-weight:400;transform:scaleX(0.9491);">--</div>
</body></html>
